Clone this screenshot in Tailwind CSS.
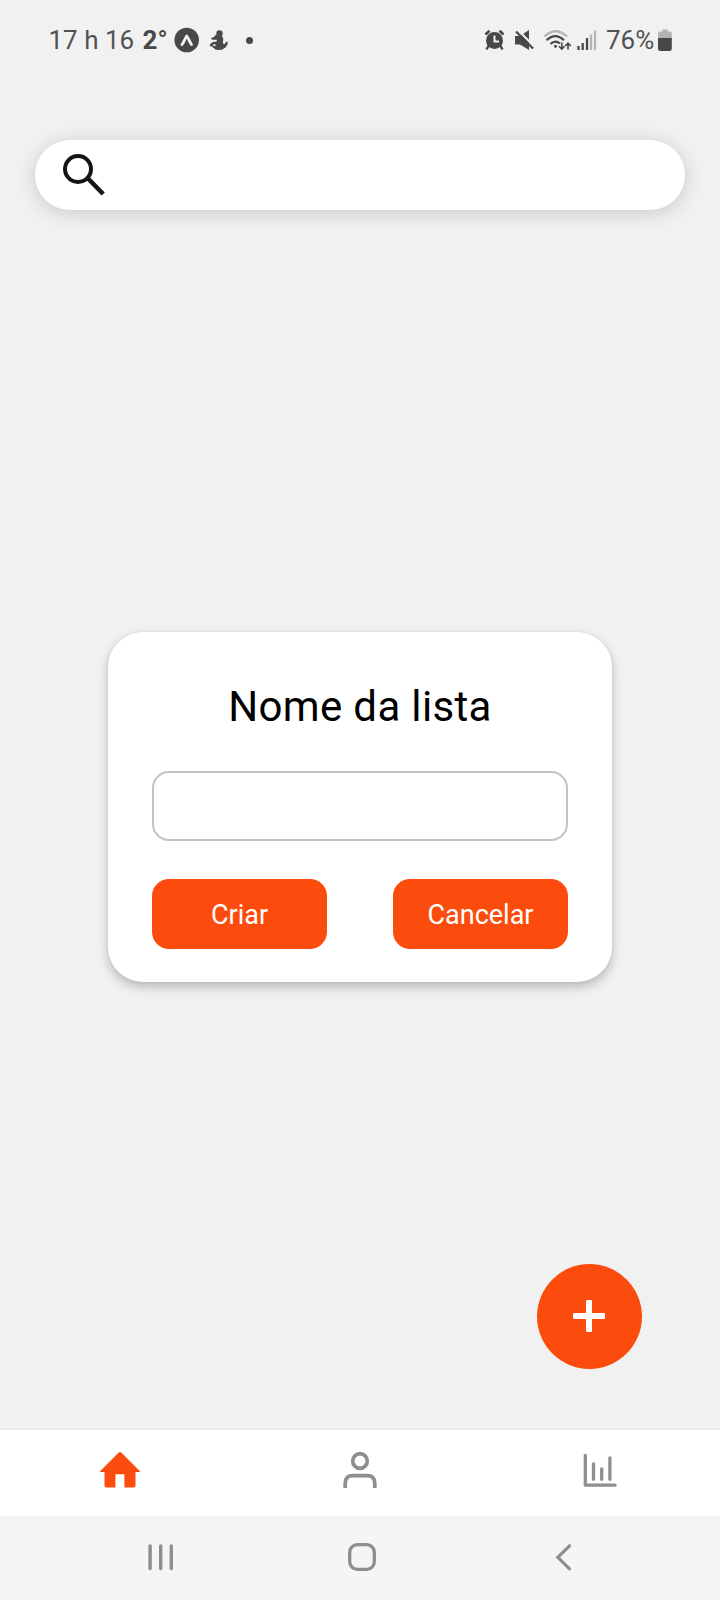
<!DOCTYPE html>
<html lang="pt">
<head>
<meta charset="utf-8">
<title>Nome da lista</title>
<script src="https://cdn.jsdelivr.net/npm/@tailwindcss/browser@4"></script>
</head>
<body class="bg-[#f1f1f1] font-[Roboto,sans-serif]">
<div class="flex h-[1600px] w-[720px] flex-col overflow-hidden">

  <!-- Status bar -->
  <header class="flex h-20 shrink-0 items-center justify-between pr-[46px] pl-[48.500px] text-[26px] leading-[30px] text-[#525252]">
    <div class="flex items-center">
      <span class="w-[94px] whitespace-nowrap">17 h 16</span>
      <span class="w-[30px] font-bold whitespace-nowrap text-[#484848]">2°</span>
      <svg class="h-[26px] w-[26px]" viewBox="0 0 26 26"><circle cx="13.700" cy="13" r="12.300" fill="#484848"/><path d="M9 17.500C10.800 15 12 11.500 13.700 9C15.500 11.500 16.700 15 18.500 17.500" fill="none" stroke="#f1f1f1" stroke-width="2.800" stroke-linecap="round" stroke-linejoin="round"/></svg>
      <svg class="ml-2.5 h-6 w-5" viewBox="208.5 28 20 24" fill="#484848"><circle cx="219" cy="33.500" r="3.200"/><path d="M217.500 35.500L220.800 35.500Q223.500 38 222.500 41.500Q222 44.500 224 44Q225.500 43 225.500 41.500L227.500 42.300Q226.500 47 223.500 48.500Q220 51 215 49.500Q212 46.500 209 45.500Q209.500 43 212.500 42L216 41.500L216.500 39.800L211.500 39.800L210.500 38L213.500 37L214.500 35.500L217 34Z"/><path d="M211.500 45.500L214.300 43.800L215.500 46Z" fill="#f1f1f1"/></svg>
      <span class="ml-[17px] h-[7px] w-[7px] rounded-full bg-[#484848]"></span>
    </div>
    <div class="flex items-center">
      <svg class="h-6 w-[22px]" viewBox="484 28 22 24"><circle cx="494.500" cy="40.500" r="8.500" fill="#484848"/><path d="M489 45L486.500 49.500M500 45L502.500 49.500" stroke="#484848" stroke-width="2.500"/><path d="M485.500 34.500L489.500 30.800M503.500 34.500L499.500 30.800" stroke="#484848" stroke-width="2.600"/><path d="M494.500 35.500V41.500H499" fill="none" stroke="#f1f1f1" stroke-width="2"/></svg>
      <svg class="ml-2 h-6 w-[22px]" viewBox="514 28 22 24"><path d="M515 36H520L529 30V50L520 44.500H515Z" fill="#484848"/><path d="M517.800 30L535 47.200" stroke="#f1f1f1" stroke-width="2.200"/><path d="M516 31.500L533 48.500" stroke="#484848" stroke-width="2.300"/></svg>
      <svg class="ml-[7px] h-6 w-[30px]" viewBox="543 28 30 24" fill="none" stroke-width="2.200"><path d="M544.500 36.500Q555.500 26 567 36.500" stroke="#b4b4b4"/><path d="M546.500 40.300Q555.500 32 564 40.300M550.500 43.800Q555.500 39.500 560 43.500" stroke="#484848"/><circle cx="555.500" cy="46.200" r="1.500" fill="#484848"/><path d="M561.800 42.500V49M559 46.200L561.800 49L564.600 46.200M568 49.500V43.300M565.200 46L568 43.200L570.800 46" stroke="#484848" stroke-width="1.600"/></svg>
      <svg class="ml-1 h-6 w-5" viewBox="577 28 20 24"><path d="M578.500 46V50M582.700 43V50M587 38V50" stroke="#484848" stroke-width="2.300"/><path d="M591 34.500V50M595 30.500V50" stroke="#b4b4b4" stroke-width="2.300"/></svg>
      <span class="ml-[9px] w-[50px] whitespace-nowrap">76%</span>
      <svg class="ml-0.5 h-6 w-4" viewBox="658.5 28 16 24"><path d="M663 29.500H668V31.500H670.500Q672.300 31.500 672.300 33.500V40H658.500V33.500Q658.500 31.500 660.500 31.500H663Z" fill="#b4b4b4"/><path d="M658.500 38H672.300V48.500Q672.300 51 670 51H661Q658.500 51 658.500 48.500Z" fill="#484848"/></svg>
    </div>
  </header>

  <main class="flex grow flex-col">
    <!-- Search field -->
    <div class="mx-[35px] mt-[60px] flex h-[70px] shrink-0 rounded-full bg-white pt-[13px] pl-[27px] shadow-[0_3px_20px_rgba(0,0,0,0.17)]">
      <svg class="h-[44px] w-[44px]" viewBox="62 152 44 44" fill="none" stroke="#151515"><circle cx="78" cy="168" r="13" stroke-width="4"/><path d="M87.500 177L103.200 193" stroke-width="4.600"/></svg>
    </div>

    <!-- New list dialog -->
    <section class="mx-[108px] mt-[422px] flex h-[350px] shrink-0 flex-col rounded-[35px] bg-white px-11 shadow-[0_5px_11px_rgba(0,0,0,0.23),0_0_3px_rgba(0,0,0,0.06)]">
      <h1 class="mt-[50px] h-[50px] text-center text-[42px] leading-[50px] tracking-[0.35px] whitespace-nowrap text-black">Nome da lista</h1>
      <input type="text" aria-label="Nome da lista" class="mt-[39px] h-[70px] w-full rounded-[17px] border-2 border-[#c4c4c4] bg-white px-4 text-[26px]">
      <div class="mt-[37.500px] flex justify-between text-[27px] leading-[30px] text-white">
        <button class="h-[70px] w-[175px] rounded-[17px] bg-[#fc4c0d] pt-0.5">Criar</button>
        <button class="h-[70px] w-[175px] rounded-[17px] bg-[#fc4c0d] pt-0.5">Cancelar</button>
      </div>
    </section>

    <!-- Add button -->
    <button aria-label="Adicionar" class="mt-[282px] mr-[78px] flex h-[105px] w-[105px] shrink-0 items-center justify-center self-end rounded-full bg-[#fc4c0d] pr-px pb-px">
      <svg class="h-8 w-8" viewBox="0 0 32 32" fill="#fff"><rect x="0" y="13" width="32" height="6" rx="1.200"/><rect x="13" y="0" width="6" height="32" rx="1.200"/></svg>
    </button>
  </main>

  <!-- Tab bar -->
  <nav class="grid h-[88px] shrink-0 grid-cols-3 items-center justify-items-center border-t-2 border-[#ebebeb] bg-white pb-1.5">
    <svg class="h-10 w-11" viewBox="98 1450 44 40" fill="#fc4c0d"><path d="M118.500 1452.700Q120 1451.500 121.500 1452.700L140 1471.200Q140.300 1472 139.500 1472H135.500V1485.500Q135.500 1487.600 133.500 1487.600H124.400V1474.300H115.400V1487.600H106.500Q104.500 1487.600 104.500 1485.500V1472H100.500Q99.700 1472 100 1471.200Z"/></svg>
    <svg class="h-10 w-11" viewBox="338 1450 44 40" fill="none" stroke="#8e8e8e" stroke-width="3.700"><circle cx="360" cy="1461" r="7.300"/><path d="M345.200 1488V1483.500Q345.200 1475.700 353 1475.700H367Q374.800 1475.700 374.800 1483.500V1488"/></svg>
    <svg class="h-10 w-11" viewBox="578 1450 44 40" fill="none" stroke="#8e8e8e" stroke-width="3.300" stroke-linecap="round" stroke-linejoin="round"><path d="M585.300 1455.300V1485.200H615M593.500 1463.800V1479.300M601.700 1469V1479.300M609.900 1458V1479.300"/></svg>
  </nav>

  <!-- System navigation -->
  <footer class="flex h-[84px] shrink-0 items-center bg-[#f5f5f5] pb-0.5 pl-[146px]">
    <svg class="h-[30px] w-[30px]" viewBox="146 1542 30 30" stroke="#8e8e8e" stroke-width="3.400" stroke-linecap="round"><path d="M150.100 1546V1568.500M160.700 1546V1568.500M171.300 1546V1568.500"/></svg>
    <svg class="ml-[171px] h-[30px] w-[30px]" viewBox="347 1542 30 30" fill="none" stroke="#8e8e8e" stroke-width="3.300"><rect x="349.700" y="1544.700" width="24.600" height="24.600" rx="7.500"/></svg>
    <svg class="ml-[176px] h-[30px] w-5" viewBox="553 1542 20 30" fill="none" stroke="#8e8e8e" stroke-width="3.200" stroke-linecap="round"><path d="M569.500 1545.800L557.800 1557.300L569.500 1568.800"/></svg>
  </footer>
</div>
</body>
</html>
